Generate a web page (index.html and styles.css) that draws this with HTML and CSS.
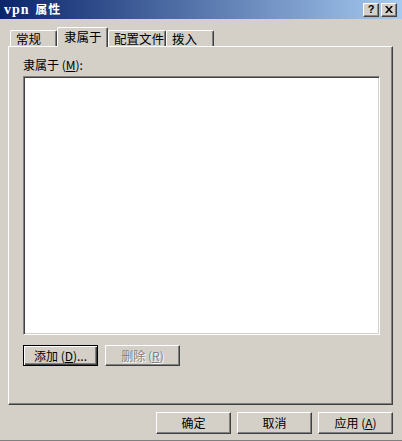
FILE: index.html
```html
<!DOCTYPE html>
<html lang="zh-CN">
<head>
    <meta charset="UTF-8">
    <title>vpn 属性</title>
    <link rel="stylesheet" href="styles.css">
</head>
<body>
<div id="window">
    <div id="titlebar">
        <span class="title"><span class="latin">vpn</span> 属性</span>
        <div class="caption-buttons">
            <span class="cap-btn">?</span>
            <span class="cap-btn close">
                <svg width="8" height="7" viewBox="0 0 8 7"><path d="M0 0h2l2 2.5L6 0h2L5 3.5 8 7H6L4 4.5 2 7H0l3-3.5z" fill="#000"/></svg>
            </span>
        </div>
    </div>
    <div class="tabs">
        <div class="tab t1">常规</div>
        <div class="tab t2 active">隶属于</div>
        <div class="tab t3">配置文件</div>
        <div class="tab t4">拨入</div>
    </div>
    <div class="panel">
        <div class="label">隶属于 (<u>M</u>):</div>
        <div class="listbox"></div>
        <div class="list-buttons">
            <div class="btn default">添加 (<u>D</u>)...</div>
            <div class="btn disabled">删除 (<u>R</u>)</div>
        </div>
    </div>
    <div class="footer">
        <div class="btn">确定</div>
        <div class="btn">取消</div>
        <div class="btn">应用 (<u>A</u>)</div>
    </div>
</div>
</body>
</html>
```
FILE: styles.css
```css
body {
    margin: 0;
    background: #d4d0c8;
    font-family: "Noto Sans CJK SC", "Liberation Sans", sans-serif;
    font-size: 12px;
    color: #000;
}
#window {
    width: 402px;
    height: 441px;
    box-sizing: border-box;
    background: #d4d0c8;
    border-bottom: 1px solid #808080;
    display: flex;
    flex-direction: column;
}
#titlebar {
    height: 19px;
    display: flex;
    align-items: center;
    justify-content: space-between;
    padding: 0 5px 0 4px;
    background: linear-gradient(to right, #0a246a, #a6caf0);
}
#titlebar .title {
    color: #fff;
    font-weight: bold;
    font-size: 12px;
    line-height: 14px;
    letter-spacing: 1px;
    word-spacing: 2px;
}
#titlebar .latin {
    font-family: "Liberation Serif", serif;
    font-size: 14px;
    letter-spacing: 1px;
}
.caption-buttons {
    display: flex;
    gap: 2px;
}
.cap-btn {
    width: 16px;
    height: 14px;
    box-sizing: border-box;
    border: 1px solid;
    border-color: #fff #404040 #404040 #fff;
    box-shadow: inset -1px -1px #808080;
    background: #d4d0c8;
    display: flex;
    align-items: center;
    justify-content: center;
    font-family: "Liberation Sans", sans-serif;
    font-weight: bold;
    font-size: 11px;
    line-height: 1;
}
.tabs {
    display: flex;
    align-items: flex-end;
    margin-top: 8px;
    padding-left: 10px;
    height: 19px;
    position: relative;
    z-index: 1;
}
.tab {
    height: 16px;
    box-sizing: border-box;
    border: 1px solid;
    border-bottom: none;
    border-color: #fff #404040 #fff #fff;
    box-shadow: inset -1px 0 #808080;
    border-radius: 2px 2px 0 0;
    padding-left: 5px;
    line-height: 15px;
    font-size: 12.5px;
}
.t1 { width: 47px; }
.t2 { width: 51px; }
.t3 { width: 58px; }
.t4 { width: 48px; }
.tab.active {
    height: 20px;
    margin-bottom: -1px;
    background: #d4d0c8;
    padding-left: 6px;
    line-height: 17px;
}
.panel {
    height: 359px;
    box-sizing: border-box;
    margin: 0 9px 0 8px;
    border: 1px solid;
    border-color: #fff #404040 #404040 #fff;
    box-shadow: inset -1px -1px #808080;
    padding: 11px 12px 0 14px;
}
.label {
    height: 14px;
    line-height: 14px;
    margin-bottom: 4px;
}
.listbox {
    height: 259px;
    box-sizing: border-box;
    background: #fff;
    border: 1px solid;
    border-color: #808080 #fff #fff #808080;
    box-shadow: inset 1px 1px #404040, inset -1px -1px #d4d0c8;
}
.list-buttons {
    display: flex;
    gap: 7px;
    margin-top: 10px;
}
.btn {
    width: 75px;
    height: 21px;
    box-sizing: border-box;
    border: 1px solid;
    border-color: #fff #404040 #404040 #fff;
    box-shadow: inset -1px -1px #808080;
    display: flex;
    align-items: center;
    justify-content: center;
    line-height: 1;
}
.btn.default {
    border-color: #000;
    box-shadow: inset 1px 1px #fff, inset -1px -1px #404040, inset -2px -2px #808080;
}
.btn.disabled {
    color: #808080;
    text-shadow: 1px 1px #fff;
}
.footer {
    display: flex;
    justify-content: flex-end;
    gap: 6px;
    padding: 7px 9px 0 0;
}
.footer .btn {
    height: 22px;
}
```
